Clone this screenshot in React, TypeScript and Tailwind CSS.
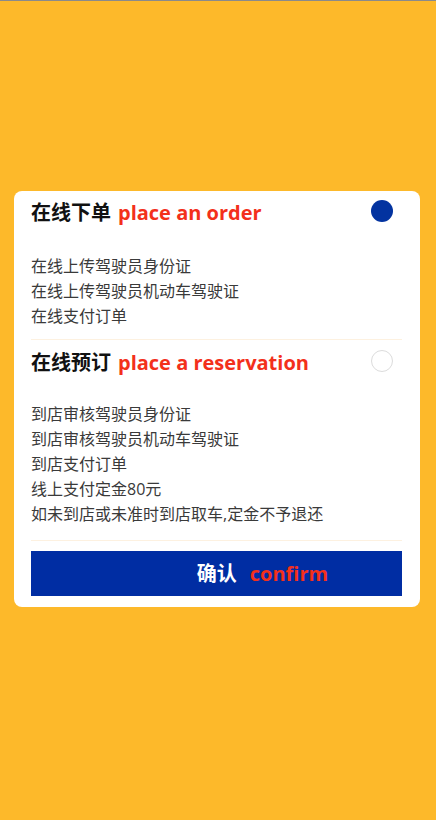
import React from "react";

interface OrderOption {
  id: string;
  title: string;
  subtitle: string;
  lines: string[];
}

const options: OrderOption[] = [
  {
    id: "online",
    title: "在线下单",
    subtitle: "place an order",
    lines: ["在线上传驾驶员身份证", "在线上传驾驶员机动车驾驶证", "在线支付订单"],
  },
  {
    id: "reserve",
    title: "在线预订",
    subtitle: "place a reservation",
    lines: [
      "到店审核驾驶员身份证",
      "到店审核驾驶员机动车驾驶证",
      "到店支付订单",
      "线上支付定金80元",
      "如未到店或未准时到店取车,定金不予退还",
    ],
  },
];

const fontStack = {
  fontFamily: '"Open Sans", "Noto Sans CJK SC", sans-serif',
};

const App: React.FC = () => {
  const [selected, setSelected] = React.useState("online");

  return (
    <div
      className="min-h-screen bg-[#fdb92a] border-t border-[#8a8a8a] pt-[190px] pl-[14px] pr-[16px]"
      style={fontStack}
    >
      <div className="bg-white rounded-[8px] pl-[17px] pr-[18px]">
        {options.map((opt, i) => (
          <section
            key={opt.id}
            onClick={() => setSelected(opt.id)}
            className={`border-b border-[#fdf1e0] cursor-pointer ${
              i === 0 ? "pt-[10px] pb-[10px]" : "pt-[11px] pb-[13px]"
            }`}
          >
            <div className="flex items-start justify-between">
              <h2 className="flex items-center h-[24px] leading-[24px] font-bold">
                <span className="text-[20px] text-[#111]">{opt.title}</span>
                <span className="ml-[7px] text-[20px] text-[#f3301b]">
                  {opt.subtitle}
                </span>
              </h2>
              <span
                className={`mt-[-1px] mr-[9px] h-[22px] w-[22px] rounded-full ${
                  selected === opt.id
                    ? "bg-[#0333a0]"
                    : "border border-[#dcdcdc] bg-white"
                }`}
              />
            </div>
            <ul
              className={`${
                i === 0 ? "mt-[29px]" : "mt-[27px]"
              } text-[16px] leading-[25px] text-[#3a3a3a]`}
            >
              {opt.lines.map((line) => (
                <li key={line}>{line}</li>
              ))}
            </ul>
          </section>
        ))}

        <div className="pt-[10px] pb-[11px]">
          <button
            type="button"
            className="flex h-[45px] w-full items-center justify-center bg-[#002da3] pl-[92px] font-bold"
          >
            <span className="text-[20px] text-white">确认</span>
            <span className="ml-[13px] text-[20px] text-[#f3301b]">confirm</span>
          </button>
        </div>
      </div>
    </div>
  );
};

export default App;
